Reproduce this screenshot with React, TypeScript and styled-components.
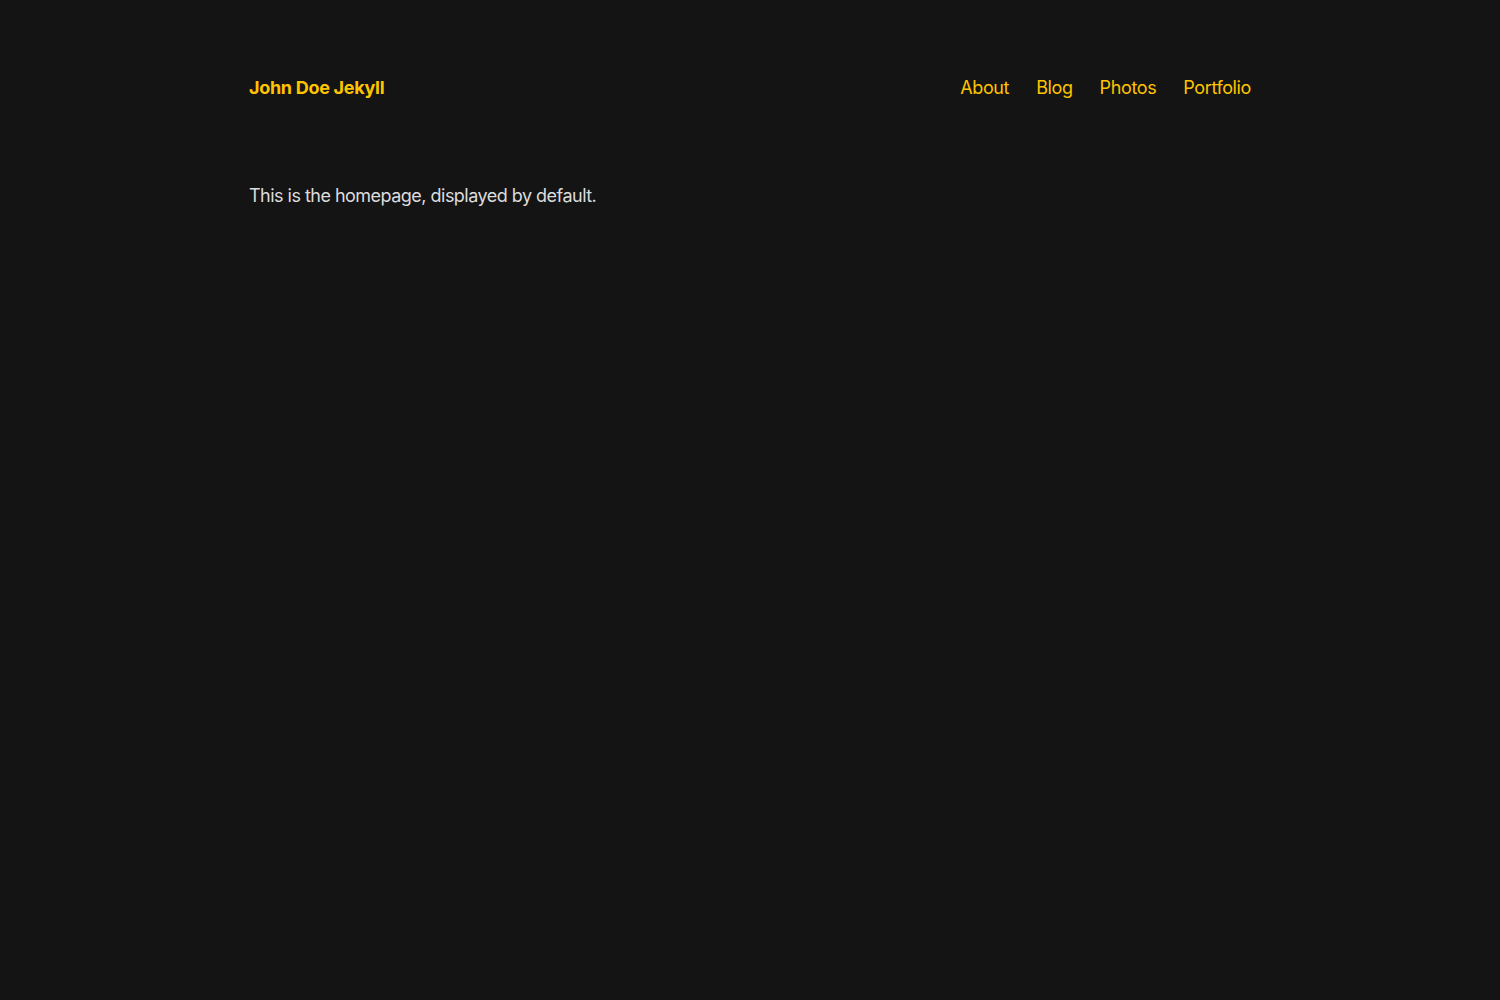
import React from "react";
import styled, { createGlobalStyle } from "styled-components";

const Global = createGlobalStyle`
  html, body { margin: 0; padding: 0; background: #141414; }
  body { font-family: Inter, "Noto Sans", sans-serif; color: #dcdcdc; }
`;

const Page = styled.div`
  min-height: 1000px;
  background: #141414;
`;

const Container = styled.div`
  width: 1002px;
  margin: 0 auto;
  padding-top: 73px;
`;

const Header = styled.header`
  display: flex;
  justify-content: space-between;
  align-items: center;
  height: 28px;
`;

const Brand = styled.a`
  color: #ffc400;
  font-weight: 700;
  font-size: 18px;
  letter-spacing: -0.3px;
  text-decoration: none;
`;

const Nav = styled.nav`
  display: flex;
  gap: 27px;
`;

const NavLink = styled.a`
  color: #ffc400;
  font-size: 18px;
  letter-spacing: -0.38px;
  text-decoration: none;
`;

const Main = styled.main`
  padding-top: 81px;
`;

const Para = styled.p`
  margin: 0;
  font-size: 18px;
  line-height: 28px;
  letter-spacing: -0.52px;
  color: #dcdcdc;
`;

export default function App() {
  return (
    <Page>
      <Global />
      <Container>
        <Header>
          <Brand href="#">John Doe Jekyll</Brand>
          <Nav>
            <NavLink href="#">About</NavLink>
            <NavLink href="#">Blog</NavLink>
            <NavLink href="#">Photos</NavLink>
            <NavLink href="#">Portfolio</NavLink>
          </Nav>
        </Header>
        <Main>
          <Para>This is the homepage, displayed by default.</Para>
        </Main>
      </Container>
    </Page>
  );
}
